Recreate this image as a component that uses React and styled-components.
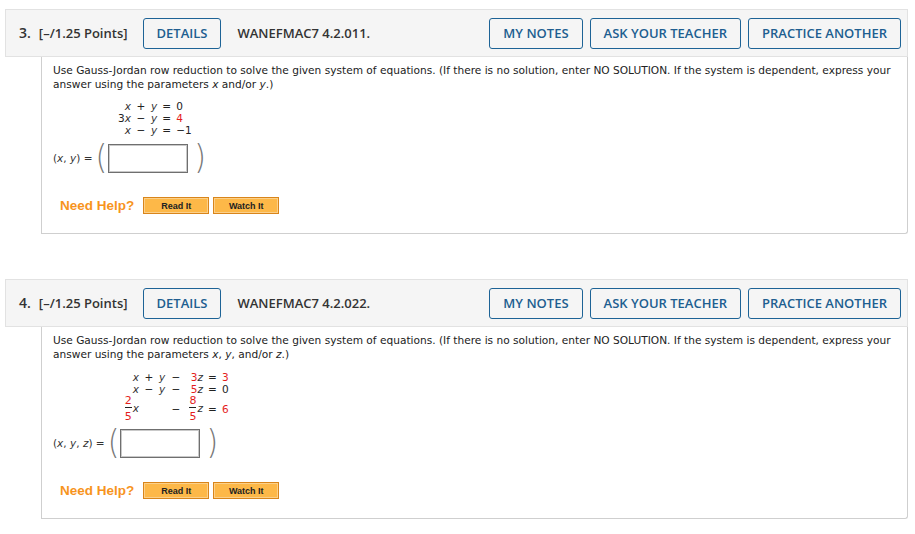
import React from 'react';
import styled, { createGlobalStyle } from 'styled-components';

const GlobalStyle = createGlobalStyle`
body {
  margin: 0;
  background: #fff;
  font-family: "DejaVu Sans", Verdana, sans-serif;
}
`;

const Page = styled.div`
  display: flex;
  flex-direction: column;
  gap: 45px;
  padding: 9px 7px 0 5px;
`;

const Header = styled.header`
  display: flex;
  align-items: center;
  height: 48px;
  box-sizing: border-box;
  padding: 0 6px 0 13px;
  background: #f5f5f5;
  border: 1px solid #e2e2e2;
  font-family: "Open Sans", "Segoe UI", sans-serif;
  font-weight: 600;
  font-size: 13px;
  color: #333;
`;

const Number = styled.span`
  font-size: 14px;
  margin-right: 8px;
  margin-top: -2px;
`;

const Points = styled.span`
  margin-right: 15px;
`;

const Code = styled.span`
  margin-left: 16px;
  flex: 1;
`;

const Tools = styled.div`
  display: flex;
  gap: 7px;
`;

const OutlineButton = styled.button`
  height: 31px;
  padding: 0 13px;
  background: transparent;
  border: 1px solid #1d6396;
  border-radius: 3px;
  font-family: inherit;
  font-weight: 600;
  font-size: 13px;
  color: #205e90;
  cursor: pointer;
`;

const Body = styled.div`
  margin-left: 36px;
  padding: 6px 6px 19px 11px;
  border: 1px solid #cfcfcf;
  border-top: none;
  border-bottom-right-radius: 3px;
  color: #222;
  font-family: "DejaVu Sans", Verdana, sans-serif;
  font-size: 10.6px;
`;

const Prompt = styled.p`
  margin: 0;
  line-height: 14px;
  i {
    font-style: italic;
  }
`;

const System = styled.div`
  display: grid;
  grid-template-columns: ${({ cols }) => cols};
  column-gap: 5px;
  align-items: center;
  justify-content: start;
  margin: ${({ top }) => top}px 0 0 ${({ indent }) => indent}px;
  font-size: 10.5px;
  line-height: 12px;
`;

const Cell = styled.span`
  text-align: ${({ align }) => align || 'left'};
  line-height: ${({ tall }) => (tall ? '25px' : 'inherit')};
  color: ${({ red }) => (red ? '#e41d1d' : '#222')};
  white-space: nowrap;
`;

const Var = styled.i`
  color: #333;
`;

const Red = styled.span`
  color: #e41d1d;
`;

const Frac = styled.span`
  display: inline-flex;
  flex-direction: column;
  align-items: center;
  vertical-align: middle;
  padding: 0 1px;
  font-size: 11px;
  line-height: 11px;
  color: #e41d1d;
`;

const Bar = styled.span`
  align-self: stretch;
  height: 1px;
  background: #222;
  margin: 1px 0 3px;
`;

const Answer = styled.div`
  display: flex;
  align-items: center;
  height: 32px;
  margin-top: ${({ top }) => top}px;
  font-size: 10.5px;
  color: #333;
`;

const Paren = styled.span`
  display: inline-block;
  font-family: "DejaVu Sans", sans-serif;
  font-weight: 200;
  font-size: 30px;
  line-height: 32px;
  color: #777;
  transform: scaleY(1.1);
  margin: 0 ${({ right }) => (right ? 0 : 1)}px 0 ${({ right }) => (right ? 6 : 3)}px;
`;

const Box = styled.span`
  display: inline-block;
  width: 80px;
  height: 29px;
  box-sizing: border-box;
  border: 1px solid #6f6f6f;
  box-shadow: inset 0 0 0 1px #c9c9c9;
  background: #fff;
`;

const Help = styled.div`
  display: flex;
  align-items: center;
  gap: 4px;
  margin: 23px 0 0 7px;
`;

const HelpLabel = styled.span`
  font-family: "Liberation Sans", Arial, sans-serif;
  font-weight: 700;
  font-size: 13.5px;
  color: #f7941d;
  margin-right: 5px;
`;

const HelpButton = styled.button`
  width: 66px;
  height: 17px;
  padding: 0;
  background: #fdb848;
  border: 1px solid #d9851a;
  box-shadow: inset 0 0 0 1px #fcd089;
  font-family: "Liberation Sans", Arial, sans-serif;
  font-weight: 700;
  font-size: 9px;
  color: #222;
  cursor: pointer;
`;

const QuestionHeader = ({ num, code }) => (
  <Header>
    <Number>{num}.</Number>
    <Points>[–/1.25 Points]</Points>
    <OutlineButton>DETAILS</OutlineButton>
    <Code>{code}</Code>
    <Tools>
      <OutlineButton>MY NOTES</OutlineButton>
      <OutlineButton>ASK YOUR TEACHER</OutlineButton>
      <OutlineButton>PRACTICE ANOTHER</OutlineButton>
    </Tools>
  </Header>
);

const NeedHelp = () => (
  <Help>
    <HelpLabel>Need Help?</HelpLabel>
    <HelpButton>Read It</HelpButton>
    <HelpButton>Watch It</HelpButton>
  </Help>
);

const Fraction = ({ n, d }) => (
  <Frac>
    <span>{n}</span>
    <Bar />
    <span>{d}</span>
  </Frac>
);

const intro = 'Use Gauss-Jordan row reduction to solve the given system of equations. (If there is no solution, enter NO SOLUTION. If the system is dependent, express your answer using the parameters ';

export default function App() {
  return (
    <>
      <GlobalStyle />
      <Page>
        <section>
          <QuestionHeader num={3} code="WANEFMAC7 4.2.011." />
          <Body>
            <Prompt>
              {intro}<i>x</i> and/or <i>y</i>.)
            </Prompt>
            <System cols="auto 10px auto 9px auto" top={9} indent={65}>
              <Cell align="right"><Var>x</Var></Cell>
              <Cell align="center">+</Cell>
              <Cell><Var>y</Var></Cell>
              <Cell align="center">=</Cell>
              <Cell>0</Cell>

              <Cell align="right">3<Var>x</Var></Cell>
              <Cell align="center">−</Cell>
              <Cell><Var>y</Var></Cell>
              <Cell align="center">=</Cell>
              <Cell red>4</Cell>

              <Cell align="right"><Var>x</Var></Cell>
              <Cell align="center">−</Cell>
              <Cell><Var>y</Var></Cell>
              <Cell align="center">=</Cell>
              <Cell>−1</Cell>
            </System>
            <Answer top={6}>
              <span>(<Var>x</Var>, <Var>y</Var>) =</span>
              <Paren>(</Paren>
              <Box />
              <Paren right>)</Paren>
            </Answer>
            <NeedHelp />
          </Body>
        </section>

        <section>
          <QuestionHeader num={4} code="WANEFMAC7 4.2.022." />
          <Body>
            <Prompt>
              {intro}<i>x</i>, <i>y</i>, and/or <i>z</i>.)
            </Prompt>
            <System cols="17px 10px 7px 10px 17px 9px auto" top={10} indent={69}>
              <Cell align="right"><Var>x</Var></Cell>
              <Cell align="center">+</Cell>
              <Cell><Var>y</Var></Cell>
              <Cell align="center">−</Cell>
              <Cell align="right"><Red>3</Red><Var>z</Var></Cell>
              <Cell align="center">=</Cell>
              <Cell red>3</Cell>

              <Cell align="right"><Var>x</Var></Cell>
              <Cell align="center">−</Cell>
              <Cell><Var>y</Var></Cell>
              <Cell align="center">−</Cell>
              <Cell align="right"><Red>5</Red><Var>z</Var></Cell>
              <Cell align="center">=</Cell>
              <Cell>0</Cell>

              <Cell align="right" tall>
                <Fraction n="2" d="5" /><Var>x</Var>
              </Cell>
              <Cell />
              <Cell />
              <Cell align="center">−</Cell>
              <Cell align="right"><Fraction n="8" d="5" /><Var>z</Var></Cell>
              <Cell align="center">=</Cell>
              <Cell red>6</Cell>
            </System>
            <Answer top={5}>
              <span>(<Var>x</Var>, <Var>y</Var>, <Var>z</Var>) =</span>
              <Paren>(</Paren>
              <Box />
              <Paren right>)</Paren>
            </Answer>
            <NeedHelp />
          </Body>
        </section>
      </Page>
    </>
  );
}
